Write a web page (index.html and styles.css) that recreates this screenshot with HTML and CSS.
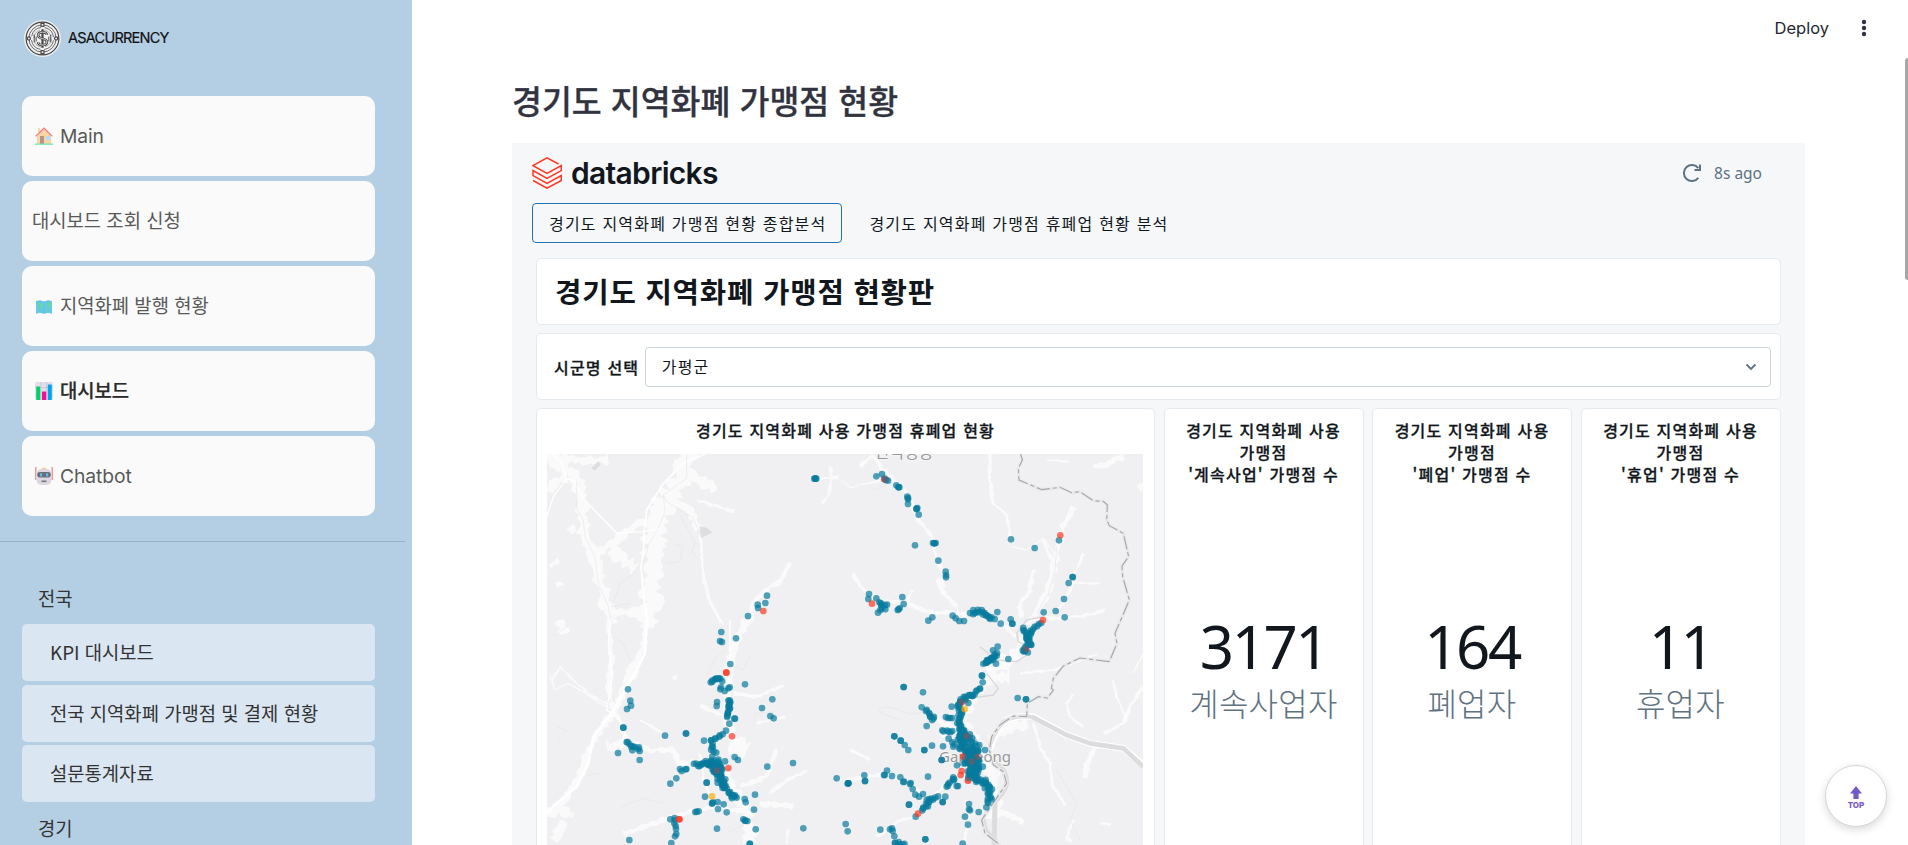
FILE: index.html
```html
<!DOCTYPE html>
<html lang="ko">
<head>
<meta charset="utf-8">
<title>ASACURRENCY</title>
<link rel="stylesheet" href="styles.css">
</head>
<body>
<div class="app">
  <aside class="sidebar">
    <div class="brand">
      <svg class="coin" viewBox="0 0 38 38" fill="none" stroke="#444" stroke-width="1">
        <circle cx="19" cy="19" r="18.5" fill="#f1f1f1" stroke="#e8edf1"/>
        <circle cx="19" cy="19" r="16.8" stroke-width="1.2"/>
        <circle cx="19" cy="19" r="14" stroke-width=".8"/>
        <circle cx="19" cy="19" r="11.4" stroke-width=".8" stroke-dasharray="14 3.9" stroke-dashoffset="-2"/>
        <circle cx="19" cy="19" r="8.8" stroke="#888" stroke-width=".7" stroke-dasharray="11 2.8"/>
        <path d="M10.5 15v8M12.500 17v5M27.500 15v8M25.500 17v5"/>
        <path d="M19 9.500v19" stroke-width="2.200"/>
        <path d="M23.500 15.500c0-2-2-3-4.500-3s-4.500 1-4.500 3.200c0 4.600 9 2.300 9 6.800 0 2.300-2 3.200-4.500 3.200s-4.500-1-4.500-3.200" stroke-width="2.600"/>
        <path d="M23.500 15.500c0-2-2-3-4.500-3s-4.500 1-4.500 3.200c0 4.600 9 2.300 9 6.800 0 2.300-2 3.200-4.500 3.200s-4.500-1-4.500-3.200" stroke="#eee" stroke-width=".9"/>
        <g fill="#f1f1f1" stroke-width="1.200"><rect x="17.500" y="3.500" width="3" height="3"/><rect x="17.500" y="31.500" width="3" height="3"/><circle cx="5" cy="19" r="1.600"/><circle cx="33" cy="19" r="1.600"/></g>
      </svg>
      <span class="brand-name">ASACURRENCY</span>
    </div>
    <nav class="menu">
      <a class="item"><svg class="emoji" viewBox="0 0 18 18"><path d="M3 1h2v4H3z" fill="#fbd5a5"/><path d="M2 9 9 2l7 7v8H2z" fill="#fbd5a5"/><path d="M.8 9.300 9 1.200l8.200 8.100" fill="none" stroke="#f87c80" stroke-width="1.300"/><path d="M5 9h4v8H5z" fill="#b79487"/><path d="M11 9h4v4h-4z" fill="#b5dcfa"/><path d="M0 16.500h18v1.300H0z" fill="#6ceab0"/></svg><span class="latin">Main</span></a>
      <a class="item plain"><span>대시보드 조회 신청</span></a>
      <a class="item"><svg class="emoji" viewBox="0 0 18 18"><path d="m1 4 4-.8 4 1.200 4-1.200 4 .8v12.800l-4-1-4 1-4-1-4 1z" fill="#68c5ee"/><path d="m3 5 4 1 1 3-3 3 1 4-3-3zM11 6l5-1v4l-2 3-1 4-2-2 1-4z" fill="#65dba6"/><path d="M5 3.500v12M9 4.500v12M13 3.500v12" stroke="#58b7dc" stroke-width=".5"/></svg><span>지역화폐 발행 현황</span></a>
      <a class="item active"><svg class="emoji" viewBox="0 0 18 18"><rect width="18" height="18" rx="2" fill="#e2dceb"/><path d="M0 5.500h18M5.700 0v18M11.600 0v18" stroke="#c6bdd2" stroke-width=".7"/><rect x="1.200" y="4.500" width="4" height="13.500" rx=".5" fill="#00d26a"/><rect x="7" y="9.500" width="4.200" height="8.500" rx=".5" fill="#fb0b93"/><rect x="12.800" y="2.500" width="4" height="15.500" rx=".5" fill="#00a6ed"/></svg><span>대시보드</span></a>
      <a class="item"><svg class="emoji" viewBox="0 0 18 18"><path d="M.8 0v13M17.200 0v13" stroke="#f59095" stroke-width="1.400"/><rect x="1.500" y="2" width="15" height="16" rx="5" fill="#dcd7e2"/><path d="M6 2q3-2.500 6 0z" fill="#fbcb78"/><rect x="2.200" y="5" width="13.600" height="5.500" rx="2.700" fill="#6f6b75"/><path d="M5 6.200h2.200v3.300H5zM11 6.200h2.200v3.300H11z" fill="#55bdf0"/><path d="M6.500 13.500h5v1.600h-5z" fill="#777"/></svg><span class="latin">Chatbot</span></a>
    </nav>
    <div class="divider"></div>
    <div class="section">전국</div>
    <nav class="submenu">
      <a>KPI 대시보드</a>
      <a>전국 지역화폐 가맹점 및 결제 현황</a>
      <a>설문통계자료</a>
    </nav>
    <div class="section last">경기</div>
  </aside>

  <main class="main">
    <header class="topbar">
      <span>Deploy</span>
      <svg width="6" height="20" viewBox="0 0 6 20" fill="#31333f"><circle cx="3" cy="4" r="2.200"/><circle cx="3" cy="10" r="2.200"/><circle cx="3" cy="16" r="2.200"/></svg>
    </header>
    <h1>경기도 지역화폐 가맹점 현황</h1>
    <section class="board">
      <div class="board-head">
        <svg class="bricks" viewBox="0 0 30 32" fill="none" stroke="#ff3621" stroke-width="1.500"><path d="M26.500 7 15 .9 1 8.600l14 7.800L29.300 8.600v5L15 21.400 1 13.600v5l14 7.800 14.300-7.800v4.900L15 31.200 1 23.500"/></svg>
        <span class="wordmark">databricks</span>
        <span class="fresh"><svg width="20" height="20" viewBox="0 0 20 20" fill="none" stroke="#5f7281" stroke-width="2"><path d="M16.300 14.800A8 8 0 1 1 16.300 5.200"/><path d="M18 1.500v5.500h-5.500" /></svg><span>8s ago</span></span>
      </div>
      <div class="tabs">
        <span class="tab on">경기도 지역화폐 가맹점 현황 종합분석</span>
        <span class="tab">경기도 지역화폐 가맹점 휴폐업 현황 분석</span>
      </div>
      <div class="card heading">경기도 지역화폐 가맹점 현황판</div>
      <div class="card filter">
        <label>시군명 선택</label>
        <div class="select"><span>가평군</span><svg width="12" height="8" viewBox="0 0 12 8" fill="none" stroke="#5f7281" stroke-width="1.800"><path d="m1.500 1.500 4.500 4.500 4.500-4.500"/></svg></div>
      </div>
      <div class="widgets">
        <div class="card mapcard">
          <h3>경기도 지역화폐 사용 가맹점 휴폐업 현황</h3>
          <svg class="map" viewBox="547 454 596 391">
            <rect x="547" y="454" width="596" height="391" fill="#f0f0f2"/>
            <g id="land"></g>
            <text class="place" x="904" y="458" text-anchor="middle" font-size="16">신덕성동</text>
            <text class="place" x="975" y="762" text-anchor="middle" font-size="15">Gapyeong</text>
            <g id="dots"></g>
          </svg>
        </div>
        <div class="card stat"><h3>경기도 지역화폐 사용<br>가맹점<br>'계속사업' 가맹점 수</h3><b>3171</b><em>계속사업자</em></div>
        <div class="card stat"><h3>경기도 지역화폐 사용<br>가맹점<br>'폐업' 가맹점 수</h3><b>164</b><em>폐업자</em></div>
        <div class="card stat"><h3>경기도 지역화폐 사용<br>가맹점<br>'휴업' 가맹점 수</h3><b>11</b><em>휴업자</em></div>
      </div>
    </section>
  </main>
  <div class="thumb"></div>
  <div class="totop">
    <svg width="14" height="15" viewBox="0 0 14 15" fill="#7459c8"><path d="M7 0l6 7.500H9.600V13H4.400V7.500H1z"/></svg>
    <span>TOP</span>
  </div>
</div>
<script src="map.js"></script>
</body>
</html>
```
FILE: styles.css
```css
* { box-sizing: border-box; }
html, body { height: 100%; margin: 0; overflow: hidden; }
body { font-family: "Noto Sans CJK KR", sans-serif; color: #11171c; background: #fff; }
.app { display: flex; width: 1908px; height: 845px; position: relative; overflow: hidden; }

.sidebar { width: 412px; height: 845px; flex: none; background: #b4cfe4; overflow: hidden; color: #31333f; font-size: 18.800px; }
.brand { display: flex; align-items: center; gap: 7px; height: 96px; padding: 0 0 20px 24px; }
.coin { width: 37px; height: 37px; }
.brand-name { font: 400 14.500px "Inter", sans-serif; color: #111; letter-spacing: -0.750px; -webkit-text-stroke: .2px #111; padding-bottom: 2px; }
.menu { display: flex; flex-direction: column; gap: 5px; padding-left: 22px; }
.item { width: 353px; height: 80px; background: #fafafa; border-radius: 10px; display: flex; align-items: center; gap: 7px; padding-left: 13px; color: #595959; }
.item span { padding-bottom: 3px; }
.item .latin { font-family: "Inter", sans-serif; font-size: 19.300px; letter-spacing: -.1px; padding-bottom: 0; }
.item.plain { padding-left: 10px; }
.item.active { color: #2b2b2b; font-weight: 500; -webkit-text-stroke: .25px #2b2b2b; }
.emoji { width: 18px; height: 18px; }
.divider { height: 1px; width: 405px; margin-top: 25px; background: #97b3c9; }
.section { padding-left: 38px; height: 28px; line-height: 28px; margin-top: 42px; color: #333; }
.section.last { margin-top: 12px; }
.submenu { display: flex; flex-direction: column; gap: 3.500px; margin-top: 12px; padding-left: 22px; }
.submenu a { width: 353px; height: 57px; border-radius: 5px; background: #dae6f2; color: #333; line-height: 55px; padding-left: 28px; }

.main { flex: none; width: 1496px; padding-left: 100px; }
.topbar { height: 56px; display: flex; justify-content: flex-end; align-items: center; gap: 32px; padding-right: 41px; font: 16.500px "Inter", sans-serif; color: #262730; }
h1 { margin: 0; height: 87px; line-height: 48px; padding-top: 20px; font-size: 32.500px; font-weight: 500; color: #31333f; white-space: nowrap; -webkit-text-stroke: .3px; }
.board { width: 1293px; height: 702px; background: #f5f7f9; padding: 14px 24px 0; font-size: 16px; letter-spacing: 1.200px; overflow: hidden; }
.board-head { display: flex; align-items: center; height: 32px; margin-left: -4px; }
.bricks { width: 30px; height: 32px; }
.wordmark { font: 600 30px/32px "Inter", sans-serif; letter-spacing: -.7px; margin-left: 9px; color: #11171c; }
.fresh { margin-left: auto; padding-right: 19px; display: flex; align-items: center; gap: 12px; font: 15.500px "Noto Sans", sans-serif; letter-spacing: 0; color: #5f7281; }
.tabs { display: flex; gap: 10px; margin: 14px 0 15px -4px; }
.tab { height: 40px; line-height: 38px; border: 1px solid transparent; border-radius: 4px; padding: 0 15px 0 16px; white-space: nowrap; }
.tab.on { border-color: #2272b4; }
.card { background: #fff; border: 1px solid #e6ebef; border-radius: 5px; }
.heading { height: 67px; line-height: 63px; padding-left: 18px; font-size: 28.700px; font-weight: 700; letter-spacing: .8px; margin-bottom: 8px; }
.filter { height: 67px; display: flex; align-items: center; padding: 0 9px 0 17px; gap: 5.500px; margin-bottom: 8px; }
.filter label { font-weight: 500; white-space: nowrap; -webkit-text-stroke: .3px; }
.select { flex: 1; height: 40px; border: 1px solid #cbd5dc; border-radius: 4px; display: flex; align-items: center; justify-content: space-between; padding: 0 13px 0 16px; }
.select span { padding-bottom: 2px; }
.widgets { display: grid; grid-template-columns: 619px 200px 200px 200px; gap: 8.500px; height: 450px; }
.widgets h3 { margin: 0; padding-top: 10px; font-size: 16px; font-weight: 500; -webkit-text-stroke: .3px; line-height: 22px; text-align: center; white-space: nowrap; }
.map { display: block; width: 596px; height: 391px; margin: 13px 0 0 10px; }
.place { font-family: "Noto Sans", "Noto Sans CJK KR", sans-serif; fill: #999; letter-spacing: 0; paint-order: stroke; stroke: #f5f5f5; stroke-width: 2px; }
.stat { display: flex; flex-direction: column; align-items: center; }
.stat b { font: 400 60px/72px "Noto Sans", sans-serif; letter-spacing: -2.500px; margin-top: 125px; }
.stat em { font-style: normal; font-weight: 300; font-size: 32px; line-height: 40px; letter-spacing: .3px; color: #5f7281; }

.thumb { position: absolute; right: 0; top: 58px; width: 3px; height: 222px; background: #a6a6a6; border-radius: 3px 0 0 3px; }
.totop { position: absolute; left: 1825px; top: 765px; width: 62px; height: 62px; border: 1px solid #d6d6d9; border-radius: 50%; background: #fff; box-shadow: 0 3px 8px rgba(0,0,0,.15); display: flex; flex-direction: column; align-items: center; padding-top: 20px; color: #7459c8; }
.totop span { font: 800 8px/8px "Inter", sans-serif; }
```
FILE: map.js
```javascript
const NS = 'http://www.w3.org/2000/svg';
// Each tile holds coordinates at three units per pixel, from its own origin.
const tiles = { A: [540, 400], B: [840, 440], C: [540, 620], D: [840, 620] };

function add(parent, name, attrs) {
  const el = document.createElementNS(NS, name);
  for (const k in attrs) el.setAttribute(k, attrs[k]);
  parent.appendChild(el);
  return el;
}
function tile(parent, key) {
  return add(parent, 'g', { transform: `translate(${tiles[key]}) scale(.333333)` });
}

// Deterministic jitter for ragged valley outlines.
let seed = 7;
const rnd = () => (seed = (seed * 16807) % 2147483647) / 2147483647;

function valley(g, pts, w) {
  const left = [], right = [];
  for (let i = 0; i < pts.length - 1; i++) {
    const [x0, y0] = pts[i], [x1, y1] = pts[i + 1];
    const len = Math.hypot(x1 - x0, y1 - y0), nx = (y1 - y0) / len, ny = -(x1 - x0) / len;
    for (let d = 0; d < len; d += 11) {
      const t = d / len, x = x0 + (x1 - x0) * t, y = y0 + (y1 - y0) * t;
      const a = w * (.25 + rnd() * 1.05), b = w * (.25 + rnd() * 1.05);
      left.push([x + nx * a, y + ny * a]);
      right.unshift([x - nx * b, y - ny * b]);
    }
  }
  add(g, 'polygon', { points: left.concat(right).map(p => p.map(n => n.toFixed(1))).join(' '), fill: '#fafafa' });
}

const valleys = {
  A: [
    [[[20,165],[60,200],[110,235],[125,310],[130,400],[160,470],[180,540],[200,620],[215,680]], 20],
    [[[440,160],[440,230],[385,290],[350,350],[340,440],[335,540],[330,640],[325,690]], 34],
    [[[20,165],[150,185],[215,175]], 16], [[[380,290],[450,330],[480,400]], 12],
    [[[400,190],[470,240],[540,270]], 18], [[[160,470],[220,430],[290,370],[350,380]], 14],
    [[[210,450],[250,480],[290,510]], 20], [[[200,640],[270,635],[330,650]], 18],
    [[[20,270],[60,240],[90,230]], 20], [[[470,300],[530,320],[585,335]], 6],
    [[[630,670],[640,610],[690,560],[720,545],[755,480]], 8],
    [[[870,200],[875,235],[865,285],[840,320]], 6], [[[830,235],[900,232]], 6],
    [[[30,500],[60,480]], 8], [[[50,560],[70,550]], 10], [[[90,380],[105,400]], 12],
    [[[480,400],[485,470],[490,540],[510,610],[545,670]], 4]
  ],
  B: [
    [[[60,80],[95,45],[130,90],[200,160],[235,240],[275,290],[290,360],[310,400],[305,450],[350,500]], 7],
    [[[290,430],[320,420]], 14], [[[450,42],[448,110],[460,190],[500,225],[513,300]], 6],
    [[[700,200],[675,250],[655,310],[640,390],[625,450],[590,520],[560,560]], 12],
    [[[730,340],[700,410],[690,450],[670,490],[640,515]], 5], [[[580,390],[570,450],[535,500],[550,540]], 9],
    [[[40,400],[60,440],[110,480],[200,490],[220,440]], 6], [[[200,490],[260,515],[350,520],[420,520],[480,545],[530,590]], 7],
    [[[560,540],[630,535],[720,530],[800,510]], 6], [[[690,430],[780,430]], 4],
    [[[610,300],[630,350],[650,390]], 7], [[[760,80],[800,70],[860,45]], 11], [[[910,130],[890,150]], 12],
    [[[620,60],[690,65]], 3], [[[0,120],[30,140],[90,130],[130,120]], 4]
  ],
  C: [
    [[[320,0],[310,80],[270,160],[230,260],[190,320],[145,390],[120,470],[70,540],[40,570]], 12],
    [[[205,0],[215,120],[205,200],[220,270]], 9], [[[60,0],[75,50]], 16],
    [[[270,160],[280,190]], 26], [[[30,190],[60,140],[110,190],[160,230],[200,250]], 4],
    [[[20,580],[60,570],[110,590]], 18], [[[40,660],[80,600]], 14],
    [[[230,280],[260,360],[330,390],[400,390],[420,430],[490,430]], 10],
    [[[200,380],[260,370]], 20], [[[620,0],[590,60],[570,130],[560,220],[565,300],[580,360],[600,390]], 14],
    [[[570,370],[620,395]], 30], [[[540,420],[550,480],[580,520],[620,580],[630,670]], 22],
    [[[250,640],[340,610],[400,590],[470,570],[540,560],[620,580]], 8],
    [[[600,500],[680,470],[710,380]], 8], [[[660,550],[760,560]], 10], [[[690,520],[740,480],[810,450]], 6],
    [[[580,220],[650,230],[740,190]], 6], [[[480,260],[560,290]], 8], [[[480,400],[490,470],[510,530]], 5],
    [[[300,300],[380,345]], 4], [[[740,670],[745,620]], 4], [[[400,170],[412,185]], 10], [[[650,310],[740,290]], 5]
  ],
  D: [
    [[[560,30],[540,100],[470,140],[420,200],[380,260],[360,300],[400,360],[450,430],[465,520],[460,600]], 22],
    [[[420,170],[510,170]], 22], [[[300,330],[400,340]], 24], [[[450,360],[520,320],[570,310]], 18],
    [[[540,160],[640,150],[720,120],[780,100]], 5], [[[580,310],[600,380],[630,430],[640,500],[680,560]], 6],
    [[[770,370],[740,430],[735,480]], 9], [[[910,200],[870,260],[850,310],[790,340]], 6],
    [[[820,180],[830,230],[860,300]], 4], [[[730,320],[690,290],[680,250],[700,220]], 4],
    [[[460,560],[510,590],[560,610]], 9], [[[20,480],[140,460],[220,500],[270,540],[340,470],[400,440]], 7],
    [[[230,590],[270,540]], 9], [[[380,540],[390,600],[370,670]], 8], [[[110,650],[180,600],[230,590]], 6],
    [[[30,390],[90,420]], 5], [[[780,610],[820,615]], 5], [[[700,600],[680,650],[700,670]], 6],
    [[[240,260],[290,300],[350,330]], 9], [[[880,160],[910,100]], 3]
  ]
};

const lines = {
  A: [
    ['M20 350 40 290 80 235 65 190 35 160M80 235 105 245 125 290 230 400 310 395 360 385', '#fff', 4],
    ['M500 160 430 190 370 250 320 330 312 400 310 460 303 500 312 600 325 680', '#fff', 5],
    ['M110 245v80L130 360l5 50 30 60 10 80 30 70 10 50M440 160v75l-70 50 5 50-20 50-30 50-15 60M370 285l10 20 80 50 25 60', '#e2e2e2', 1.500],
    ['M420 345 465 430 455 455 480 480M380 490 420 485 428 440 400 430M290 515 240 550 215 620 270 610', '#e6e6e8', 2],
    ['M485 415 487 500 510 600 550 675', '#fcfcfc', 4],
    ['M155 205 175 185 180 195 165 210ZM480 380 500 385 515 397 485 412Z', '#dedede', 3]
  ],
  B: [
    ['M0 120 25 138 85 135 105 150 140 135', '#e9e9eb', 2],
    ['M205 485 260 515M300 455 350 500 360 540M515 320 560 330 610 295 650 350M350 540 385 525', '#fafafa', 4],
    ['M650 320 645 390 625 460 590 520', '#e4e4e6', 2],
    ['M610 530 560 540 530 580 535 605 575 625', '#d8d8da', 4]
  ],
  C: [
    ['M320 0 315 100 290 150 240 235 215 280 160 350 145 430 110 500 50 550 20 580', '#fff', 8],
    ['M210 0 205 70 217 170 200 270 240 300 260 360M570 0V130L560 300', '#fff', 4],
    ['M30 165 45 210 85 190 130 215 180 250 200 260', '#fafafa', 4],
    ['M240 560 310 535 370 550M50 320 80 330 50 360M270 120 250 70 220 50M40 50 80 20M500 170 530 110 560 90M640 320 645 280 700 275M560 130 610 150 630 100M130 470 180 460M560 640 620 610', '#e7e7e9', 2]
  ],
  D: [
    ['M420 80 470 120 530 125 560 105M440 160 475 205 460 225 390 235M370 315 400 345 430 390', '#d8d8da', 4],
    ['M120 265Q150 255 190 275T270 260M120 265v12l60 25M650 450l60 100-20 50 30 60', '#e6e6e8', 2],
    ['M450 390Q460 335 500 300Q530 285 580 290L680 345 750 370 850 385 910 435', '#fff', 20],
    ['M447 395Q450 350 490 305Q520 285 575 290', '#dcdcde', 12],
    ['M575 290 680 345 750 370 850 385 910 440', '#dcdcde', 14],
    ['M450 420Q500 440 500 490Q495 515 465 545L462 680', '#dcdcde', 15],
    ['M500 490 430 590 440 630 480 675', '#dcdcde', 8],
    ['M470 450 465 500', '#f7f7f7', 14]
  ]
};
const borders = {
  B: 'M542 42 547 60 535 85 537 120 605 149 660 142 695 158 720 155 760 182 790 184 802 195 800 240 808 257 850 280 866 350 846 378 848 410 868 480 825 580 831 610 808 665',
  D: 'M808 125 720 114 670 138 640 175 634 205 640 210 622 234 595 230 562 250 560 290 520 288 480 315 455 350 448 390 460 435 490 455 500 490 425 600 435 640 480 675'
};

const land = document.getElementById('land');
for (const k in tiles) { const g = tile(land, k); valleys[k].forEach(([p, w]) => valley(g, p, w)); }
for (const k in tiles) {
  const g = tile(land, k);
  lines[k].forEach(([d, c, w]) => add(g, 'path', { d, fill: w === 3 ? c : 'none', stroke: c, 'stroke-width': w, 'stroke-linejoin': 'round' }));
  if (borders[k]) {
    add(g, 'path', { d: borders[k], fill: 'none', stroke: '#e9e9eb', 'stroke-width': 10 });
    add(g, 'path', { d: borders[k], fill: 'none', stroke: '#a8a8a8', 'stroke-width': 3.5, 'stroke-dasharray': '40 9 12 9' });
  }
}

// Red markers below the blue ones, then those that lie on top.
const redUnder = {
  B: [[133,118],[558,628]],
  C: [[530,452]],
  D: [[365,247],[380,350],[370,410],[362,465],[384,482],[375,390]]
};
const redOver = {
  A: [[670,633]],
  B: [[661,286],[96,491],[609,540]],
  C: [[559,158],[559,158],[576,349],[565,444],[418,598],[418,598]],
  D: [[365,453],[234,581]]
};
const redFaint = { B: [[133,118],[558,628]], D: [[365,247],[380,348],[370,410],[395,425],[413,410],[384,482]], C: [[530,452]] };
const yellow = { C: [[516,529]], D: [[374,267]] };
const blue = {
  A: [[826,236],[823,236],[829,236],[826,236],[681,587],[676,609],[653,614],[654,624],[624,648]],
  B: [[109,109],[126,102],[134,116],[138,120],[144,122],[169,136],[176,141],[178,142],[175,142],[202,170],[204,174],[204,178],[204,192],[229,207],[232,204],[230,206],[236,224],[225,316],[279,309],[283,310],[287,309],[283,310],[295,362],[317,395],[318,406],[318,412],[513,298],[584,324],[657,301],[698,411],[698,411],[686,429],[672,477],[647,513],[674,532],[611,517],
    [87,462],[85,477],[109,475],[118,487],[122,490],[124,497],[126,505],[121,510],[114,518],[135,495],[141,494],[136,508],[124,492],[187,471],[191,492],[179,505],[176,508],[173,510],[277,532],[265,542],[338,527],[347,535],[358,543],[372,543],[390,519],[472,516],[482,551],[512,538],[517,551],[517,551]],
  C: [[544,36],[588,55],[540,63],[546,66],[571,132],[615,193],[697,238],[666,264],[691,288],[701,295],[264,208],[271,242],[273,257],[261,267],[250,323],[250,323],[263,366],[297,382],[299,393],[277,391],[299,420],[234,399],[375,347],[438,340],[438,341],[492,362],[512,187],[543,202],[541,208],[554,213],[565,205],[569,202],[531,246],[530,258],[568,311],[585,296],[583,296],[558,332],[584,411],[594,420],[682,440],[759,429],[890,475],[925,490],[925,490],[409,475],[391,491],[420,447],[425,453],[439,447],[437,448],[500,488],[500,488],[495,530],[517,549],[516,551],[519,547],[533,546],[551,553],[534,567],[560,577],[614,537],[617,547],[645,524],[642,569],[610,598],[616,602],[622,603],[615,602],[647,628],[476,574],[466,576],[470,575],[531,626],[391,598],[404,594],[404,600],[403,610],[407,618],[408,627],[409,642],[405,649],[394,669],[268,660],[790,625],[917,612],[923,634],[629,671],[630,672],[555,424],[517,410],[556,478]],
  D: [[191,201],[191,201],[249,217],[245,262],[260,318],[335,260],[163,349],[163,349],[182,362],[182,362],[194,375],[205,390],[253,390],[253,390],[276,377],[309,379],[305,420],[305,420],[307,331],[326,356],[533,234],[558,238],[558,238],[473,80],[459,91],[505,117],[468,131],[426,167],[426,167],[428,187],[419,206],[385,249],[435,390],[418,375],[351,436],[264,470],[316,530],[308,546],[308,546],[340,472],[354,498],[350,498],[25,490],[23,491],[73,466],[75,483],[75,483],[141,452],[134,465],[132,465],[156,468],[181,472],[192,485],[190,486],[212,489],[210,492],[218,507],[226,524],[237,530],[249,522],[207,554],[207,554],[249,566],[250,563],[227,590],[387,552],[387,568],[390,571],[416,576],[439,562],[375,590],[384,614],[368,671],[121,629],[150,628],[156,625],[158,633],[163,649],[256,658],[256,658],[428,440],[320,500],[358,385],[340,380]]
};
// Dense streets: a polyline, its spread and the spacing of markers.
const runs = {
  B: [[[[395,518],[418,511],[440,530],[468,540]],5,5],[[[602,548],[575,570]],3,8],[[[545,568],[563,590],[565,605]],5,5],[[[575,570],[562,600],[570,615],[548,630],[562,636]],6,5],[[[470,640],[432,672]],4,6]],
  C: [[[[515,184],[532,176],[544,180]],4,4],[[[568,240],[568,265],[562,290]],3,4],[[[548,345],[516,362],[517,388],[530,400]],4,7],[[[263,366],[278,382],[299,386]],3,9],[[[462,427],[480,436],[510,428],[535,430]],7,5],[[[505,422],[530,450],[545,490],[555,505]],9,2],[[[537,425],[538,460]],11,3],[[[555,505],[573,517],[588,530],[566,532]],6,6]],
  D: [[[[468,110],[432,135]],4,5],[[[419,210],[400,225],[375,232]],4,6],[[[376,235],[355,250],[362,280],[355,310],[368,340]],5,4],[[[260,270],[278,290],[272,302]],6,5],[[[320,293],[338,293]],3,5],[[[312,337],[350,335]],7,8],[[[365,335],[380,370],[400,400],[405,450]],17,1.400],[[[345,370],[375,385]],8,5],[[[385,410],[395,460],[408,480]],16,2],[[[408,478],[430,485],[450,505],[448,545]],8,3.500],[[[345,475],[318,498]],4,6],[[[290,535],[265,545],[250,568]],6,5],[[[165,670],[190,672]],5,4]]
};
const dots = document.getElementById('dots');
function plot(key, list, fill, opacity = .7) {
  const g = tile(dots, key);
  for (const [cx, cy] of list) add(g, 'circle', { cx, cy, r: 10, fill, 'fill-opacity': opacity });
}
for (const k in redUnder) plot(k, redUnder[k], '#ff3621');
for (const k in runs) {
  const pts = [];
  for (const [line, spread, step] of runs[k])
    for (let i = 0; i < line.length - 1; i++) {
      const [x0, y0] = line[i], [x1, y1] = line[i + 1], len = Math.hypot(x1 - x0, y1 - y0);
      for (let d = 0; d <= len; d += step)
        pts.push([x0 + (x1 - x0) * d / len + (rnd() - .5) * 2 * spread, y0 + (y1 - y0) * d / len + (rnd() - .5) * 2 * spread]);
    }
  plot(k, pts, '#077a9d');
}
for (const k in blue) plot(k, blue[k], '#077a9d');
for (const k in redFaint) plot(k, redFaint[k], '#ff3621', .3);
for (const k in redOver) plot(k, redOver[k], '#ff3621');
for (const k in yellow) plot(k, yellow[k], '#ffab00');
```
